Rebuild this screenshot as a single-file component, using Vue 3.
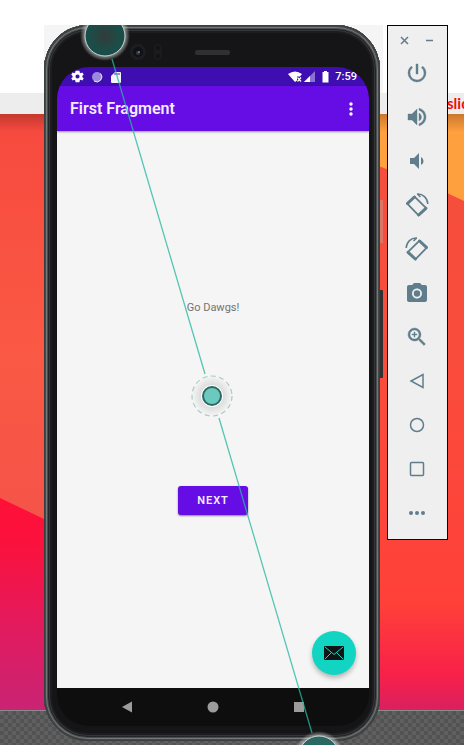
<script setup>
const tools = [
  { name: 'Power', d: 'M13 3h-2v10h2V3zm4.83 2.17-1.42 1.42A6.92 6.92 0 0 1 19 12c0 3.87-3.13 7-7 7A6.995 6.995 0 0 1 7.58 6.58L6.17 5.17A8.932 8.932 0 0 0 3 12a9 9 0 0 0 18 0c0-2.74-1.23-5.18-3.17-6.83z', weight: 1 },
  { name: 'Volume up', d: 'M3 9v6h4l5 5V4L7 9H3zm13.5 3A4.5 4.5 0 0 0 14 7.97v8.05c1.48-.73 2.5-2.25 2.5-4.02zM14 3.23v2.06c2.89.86 5 3.54 5 6.71s-2.11 5.85-5 6.71v2.06c4.01-.91 7-4.49 7-8.77s-2.99-7.86-7-8.77z', weight: 1 },
  { name: 'Volume down', d: 'M18.5 12A4.5 4.5 0 0 0 16 7.97v8.05c1.48-.73 2.5-2.25 2.5-4.02zM5 9v6h4l5 5V4L9 9H5z' },
  { name: 'Rotate left', rotate: true },
  { name: 'Rotate right', rotate: true, mirrored: true },
  { name: 'Take screenshot', d: 'M9 2 7.17 4H4c-1.1 0-2 .9-2 2v13c0 1.1.9 2 2 2h16c1.1 0 2-.9 2-2V6c0-1.1-.9-2-2-2h-3.17L15 2H9zm3 15.5c-2.76 0-5-2.24-5-5s2.24-5 5-5 5 2.24 5 5-2.24 5-5 5zM12 9.3a3.2 3.2 0 1 0 0 6.4 3.2 3.2 0 0 0 0-6.4z' },
  { name: 'Zoom', d: 'M15.5 14h-.79l-.28-.27A6.471 6.471 0 0 0 16 9.5 6.5 6.5 0 1 0 9.5 16c1.61 0 3.09-.59 4.23-1.57l.27.28v.79l5 4.99L20.49 19l-4.99-5zm-6 0C7.01 14 5 11.99 5 9.5S7.01 5 9.5 5 14 7.01 14 9.5 11.99 14 9.5 14zM9 7h1v2h2v1h-2v2H9v-2H7V9h2z', weight: 1 },
  { name: 'Back', line: 'M18 5.5v13L6 12z' },
  { name: 'Home', line: 'M12 5.5a6.5 6.5 0 1 1 0 13 6.5 6.5 0 0 1 0-13z' },
  { name: 'Overview', line: 'M6.5 5.5h11a1 1 0 0 1 1 1v11a1 1 0 0 1-1 1h-11a1 1 0 0 1-1-1v-11a1 1 0 0 1 1-1z' },
  { name: 'More', d: 'M6 10a2 2 0 1 0 0 4 2 2 0 0 0 0-4zm6 0a2 2 0 1 0 0 4 2 2 0 0 0 0-4zm6 0a2 2 0 1 0 0 4 2 2 0 0 0 0-4z' },
]
</script>

<template>
  <div class="desktop">
    <div class="backdrop">
      <div class="page-top"></div>
      <div class="page-bar"><span class="page-text">slic</span></div>
      <svg class="wallpaper" viewBox="0 0 464 596" preserveAspectRatio="none" aria-hidden="true">
        <defs>
          <linearGradient id="red" x1="0" y1="0" x2="0" y2="1">
            <stop offset="0" stop-color="#f7493f" />
            <stop offset=".4" stop-color="#fa5944" />
            <stop offset=".65" stop-color="#f55448" />
            <stop offset="1" stop-color="#f55448" />
          </linearGradient>
          <linearGradient id="right" x1="0" y1="0" x2="0" y2="1">
            <stop offset="0" stop-color="#f3503d" />
            <stop offset=".5" stop-color="#fb4a3c" />
            <stop offset=".82" stop-color="#ff4039" />
            <stop offset=".94" stop-color="#f82149" />
            <stop offset="1" stop-color="#d9205f" />
          </linearGradient>
          <linearGradient id="pink" x1="0" y1="0" x2="0" y2="1">
            <stop offset="0" stop-color="#ff1038" />
            <stop offset=".22" stop-color="#fa123d" />
            <stop offset=".6" stop-color="#e31a5e" />
            <stop offset="1" stop-color="#c92474" />
          </linearGradient>
          <linearGradient id="shade" x1="0" y1="0" x2="0" y2="1">
            <stop offset="0" stop-color="#401000" stop-opacity=".28" />
            <stop offset="1" stop-color="#401000" stop-opacity="0" />
          </linearGradient>
        </defs>
        <path d="M0 0h220v596H0z" fill="url(#red)" />
        <path d="M220 0h244v596H220z" fill="url(#right)" />
        <path d="M220 0h244v87L447 79 384 54 220 0z" fill="#ffa03e" />
        <path d="M0 384l44 21 176 80v111H0z" fill="url(#pink)" />
        <path d="M0 0h464v18H0z" fill="url(#shade)" />
      </svg>
      <div class="carbon"></div>
    </div>

    <main class="workspace">
      <section class="emulator" aria-label="Android emulator">
        <div class="phone">
          <div class="earpiece">
            <svg width="100" height="20" viewBox="0 0 100 20" aria-hidden="true">
              <circle cx="8" cy="9" r="8" fill="#1c1d1e" />
              <circle cx="8" cy="9" r="5" fill="#0f1114" />
              <circle cx="8" cy="10" r="2" fill="#303c4a" />
              <circle cx="9" cy="9" r="1" fill="#717c88" />
              <rect x="24" y="1" width="8" height="16" rx="4" fill="#1b1b1c" />
              <circle cx="28" cy="5" r="2" fill="#121213" />
              <circle cx="28" cy="13" r="2" fill="#121213" />
              <rect x="65" y="7" width="35" height="5" rx="2" fill="#303031" />
            </svg>
          </div>

          <div class="screen">
            <div class="status">
              <div class="notices">
                <svg width="13" height="13" viewBox="2 2 20 20" aria-hidden="true"><path fill="#fff" fill-rule="evenodd" d="M19.43 12.98a7.8 7.8 0 0 0 0-1.96l2.11-1.65-2-3.46-2.49 1a7.3 7.3 0 0 0-1.69-.98L15 3.3h-6l-.38 2.65a7.7 7.7 0 0 0-1.69.98l-2.49-1-2 3.46 2.11 1.65a7.9 7.9 0 0 0 0 1.96l-2.11 1.65 2 3.46 2.49-1c.52.4 1.08.73 1.69.98L9 20.7h6l.38-2.65a7.3 7.3 0 0 0 1.69-.98l2.49 1 2-3.46zM12 15.2a3.2 3.2 0 1 1 0-6.4 3.2 3.2 0 0 1 0 6.4z" /></svg>
                <svg width="12" height="12" viewBox="0 0 12 12" aria-hidden="true"><circle cx="6" cy="6" r="5" fill="#9c88dc" /><path d="M9.5 2.5A5 5 0 0 1 3 10" fill="none" stroke="#eee" stroke-width="1" /></svg>
                <svg width="12" height="12" viewBox="0 0 12 12" aria-hidden="true"><path d="M5 1h5q1 0 1 1v9q0 1-1 1H2q-1 0-1-1V5z" fill="#f4f2fb" /><path d="M5 2v2M7 2v2M9 2v2" stroke="#4b27b0" /></svg>
              </div>
              <svg width="28" height="12" viewBox="0 0 28 12" aria-hidden="true">
                <path d="M0 3q7-5 14 0l-2 2.5H9v4L7 11z" fill="#fff" />
                <path d="M9.5 6.5l3.500 4M13 6.5l-3.500 4" stroke="#fff" stroke-width="1.2" />
                <path d="M27 0v11H16z" fill="#8873d2" /><path d="M22 5v6h-6z" fill="#fff" />
              </svg>
              <svg width="7" height="12" viewBox="0 0 7 12" aria-hidden="true"><path d="M2 0h3v1h1.5v10.5h-6V1H2z" fill="#fff" /></svg>
              <time>7:59</time>
            </div>
            <header class="appbar">
              <h1>First Fragment</h1>
              <button class="kebab" aria-label="More options">
                <svg width="6" height="16" viewBox="0 0 6 16"><g fill="#fff"><circle cx="3" cy="3" r="1.7" /><circle cx="3" cy="8" r="1.7" /><circle cx="3" cy="13" r="1.7" /></g></svg>
              </button>
            </header>
            <div class="content">
              <p>Go Dawgs!</p>
              <button class="next">NEXT</button>
              <button class="fab" aria-label="Email">
                <svg width="20" height="14" viewBox="0 0 20 14"><rect width="20" height="14" rx="1" fill="#101414" /><path d="M1 1l9 7.5L19 1M1 13l6.5-6.5M19 13l-6.5-6.5" fill="none" stroke="#11d5c2" stroke-width="1" /></svg>
              </button>
            </div>
            <nav class="navbar" aria-label="System navigation">
              <button aria-label="Back"><svg width="12" height="12" viewBox="0 0 12 12"><path d="M11 .5v11L1 6z" /></svg></button>
              <button aria-label="Home"><svg width="12" height="12" viewBox="0 0 12 12"><circle cx="6" cy="6" r="5.5" /></svg></button>
              <button aria-label="Overview"><svg width="12" height="12" viewBox="0 0 12 12"><path d="M1 1h10v10H1z" /></svg></button>
            </nav>
          </div>
        </div>
        <span class="side-key power-key"></span>
        <span class="side-key volume-key"></span>

        <svg class="gesture" viewBox="0 0 339 720" preserveAspectRatio="xMidYMin meet" aria-hidden="true">
          <defs>
            <radialGradient id="touch">
              <stop offset="0" stop-color="#333b3a" />
              <stop offset=".6" stop-color="#204a46" />
              <stop offset="1" stop-color="#165049" />
            </radialGradient>
            <radialGradient id="halo">
              <stop offset=".78" stop-color="#fff" stop-opacity=".55" />
              <stop offset="1" stop-color="#fff" stop-opacity="0" />
            </radialGradient>
            <radialGradient id="soft">
              <stop offset=".3" stop-color="#000" stop-opacity=".16" />
              <stop offset="1" stop-color="#000" stop-opacity="0" />
            </radialGradient>
          </defs>
          <path d="M68 34L161 349M175 393L268 708" stroke="#27b9a2" stroke-opacity=".78" stroke-width="1.3" />
          <circle cx="61" cy="11" r="25" fill="url(#halo)" />
          <circle cx="61" cy="11" r="20" fill="url(#touch)" stroke="#c5d3d0" />
          <circle cx="275" cy="731" r="25" fill="url(#halo)" />
          <circle cx="275" cy="731" r="20" fill="#2c6863" stroke="#c5d3d0" />
          <circle cx="168" cy="371" r="20" fill="url(#soft)" />
          <circle cx="168" cy="371" r="20" fill="none" stroke="#a9cdbf" stroke-width="1.2" stroke-dasharray="5 3.4" />
          <circle cx="168" cy="371" r="11" fill="#fff" />
          <circle cx="168" cy="371" r="9" fill="#6cc9bd" stroke="#2b6a63" stroke-width="2" />
        </svg>
      </section>

      <aside class="toolbar" aria-label="Emulator controls">
        <div class="window-keys">
          <button aria-label="Close"><svg width="9" height="9" viewBox="0 0 9 9"><path d="M1 1l7 7M8 1L1 8" /></svg></button>
          <button aria-label="Minimize"><svg width="9" height="9" viewBox="0 0 9 9"><path d="M1 4.5h7" /></svg></button>
        </div>
        <button v-for="tool in tools" :key="tool.name" class="tool" :aria-label="tool.name">
          <svg width="24" height="24" viewBox="0 0 24 24">
            <g v-if="tool.rotate" :transform="tool.mirrored ? 'matrix(-1 0 0 1 24 0)' : null">
              <path d="M9.5 3.6L21.2 15.2 13.6 22.3 2.2 10.6z" fill="none" stroke="#607d8b" stroke-width="1.8" stroke-linejoin="round" />
              <path d="M2.6 10.4L9.4 4M20.9 15.3L13.7 22" stroke="#607d8b" stroke-width="3" stroke-linecap="round" />
              <path d="M12 1C18 .6 22.5 5 22.8 11M12.3 1l3.2 3" fill="none" stroke="#607d8b" stroke-width="1.5" />
            </g>
            <path v-else-if="tool.line" :d="tool.line" fill="none" stroke="#607d8b" stroke-width="1.5" />
            <path v-else :d="tool.d" fill="#607d8b" fill-rule="evenodd" :stroke="tool.weight ? '#607d8b' : 'none'" stroke-width=".4" />
          </svg>
        </button>
      </aside>
    </main>
  </div>
</template>

<style>
body {
  margin: 0;
}
</style>

<style scoped>
.desktop {
  position: relative;
  min-height: 100vh;
  overflow: hidden;
  font-family: Roboto, "Liberation Sans", sans-serif;
}
button {
  display: flex;
  align-items: center;
  justify-content: center;
  padding: 0;
  border: 0;
  background: none;
  font: inherit;
  cursor: pointer;
}
svg {
  display: block;
}
.backdrop {
  position: absolute;
  inset: 0;
  display: flex;
  flex-direction: column;
}
.page-top {
  height: 93px;
  background: #fff;
}
.page-bar {
  display: flex;
  justify-content: flex-end;
  height: 21px;
  background: #ededed;
}
.page-text {
  width: 17px;
  color: #f40b0b;
  font: bold 15px/20px Lato, sans-serif;
}
.wallpaper {
  flex: 1;
  width: 100%;
  min-height: 0;
}
.carbon {
  height: 34px;
  border-top: 1px solid #8b8b8b;
  background: repeating-conic-gradient(#535353 0 25%, #606060 0 50%) 0 0 / 8px 8px;
}
.workspace {
  position: relative;
  display: flex;
  gap: 4px;
  box-sizing: border-box;
  min-height: 100vh;
  padding: 25px 16px 0 44px;
}
.emulator {
  position: relative;
  display: flex;
  flex: 1;
  padding: 0 3px 4px 0;
  background: linear-gradient(#f5f5f5 0 68px, transparent 68px);
}
.phone {
  display: flex;
  flex: 1;
  flex-direction: column;
  padding: 0 11px 15px 13px;
  border-radius: 44px;
  background: #151517;
  box-shadow: inset 0 0 0 1px #3c3f3f, inset 0 0 0 2px #454848, inset 0 0 0 3px #737878, inset 0 0 0 4px #4a4d4d, inset 0 0 0 5px #242526, inset 0 0 0 6px #343637, inset 0 0 0 8px #1d1d1f;
}
.earpiece {
  display: flex;
  justify-content: center;
  box-sizing: border-box;
  height: 42px;
  padding: 18px 66px 0 0;
}
.screen {
  display: flex;
  flex: 1;
  flex-direction: column;
  overflow: hidden;
  border-radius: 32px;
  background: #0e0e0e;
}
.status {
  display: flex;
  align-items: center;
  gap: 6px;
  box-sizing: border-box;
  height: 19px;
  padding: 0 12px 0 14px;
  background: #3e0eb0;
  color: #fff;
  font-size: 11px;
  font-weight: 500;
}
.notices {
  display: flex;
  flex: 1;
  align-items: center;
  gap: 7px;
}
.appbar {
  position: relative;
  z-index: 1;
  display: flex;
  align-items: center;
  justify-content: space-between;
  height: 45px;
  padding: 0 15px 0 13px;
  background: #650de4;
  color: #f3ecff;
  box-shadow: 0 1px 2px #0006;
}
h1 {
  margin: 0;
  font-size: 16px;
  font-weight: 600;
  line-height: 20px;
}
.content {
  position: relative;
  display: flex;
  flex: 1;
  flex-direction: column;
  align-items: center;
  justify-content: space-evenly;
  padding-bottom: 3px;
  background: #f5f5f5;
}
p {
  margin: 0;
  color: #737373;
  font-size: 11px;
  line-height: 14px;
}
.next {
  padding: 0 19px;
  border-radius: 3px;
  background: #650de4;
  color: #f3ecff;
  font-size: 11px;
  font-weight: 600;
  line-height: 29px;
  letter-spacing: 1px;
  box-shadow: 0 1px 2px #0007;
}
.fab {
  position: absolute;
  right: 13px;
  bottom: 13px;
  width: 44px;
  height: 44px;
  border-radius: 50%;
  background: #11d5c2;
  box-shadow: 0 3px 5px #0004;
}
.navbar {
  display: flex;
  align-items: center;
  justify-content: center;
  gap: 74px;
  height: 38px;
  fill: #9c9c9c;
}
.side-key {
  position: absolute;
  right: 0;
  width: 3px;
}
.power-key {
  top: 175px;
  height: 43px;
  background: #dc7566;
}
.volume-key {
  top: 265px;
  height: 88px;
  border-radius: 0 1px 1px 0;
  background: #303030;
}
.gesture {
  position: absolute;
  z-index: 2;
  inset: 0;
  width: 100%;
  height: 100%;
  pointer-events: none;
}
.toolbar {
  align-self: flex-start;
  box-sizing: border-box;
  width: 61px;
  padding: 0 1px 4px 0;
  border: 1px solid #000;
  background: #efefef;
}
.window-keys {
  display: flex;
  align-items: center;
  justify-content: center;
  gap: 16px;
  height: 25px;
  stroke: #607d8b;
  stroke-width: 1.5;
}
.window-keys button {
  padding-top: 3px;
}
.tool {
  width: 100%;
  height: 44px;
}
</style>
